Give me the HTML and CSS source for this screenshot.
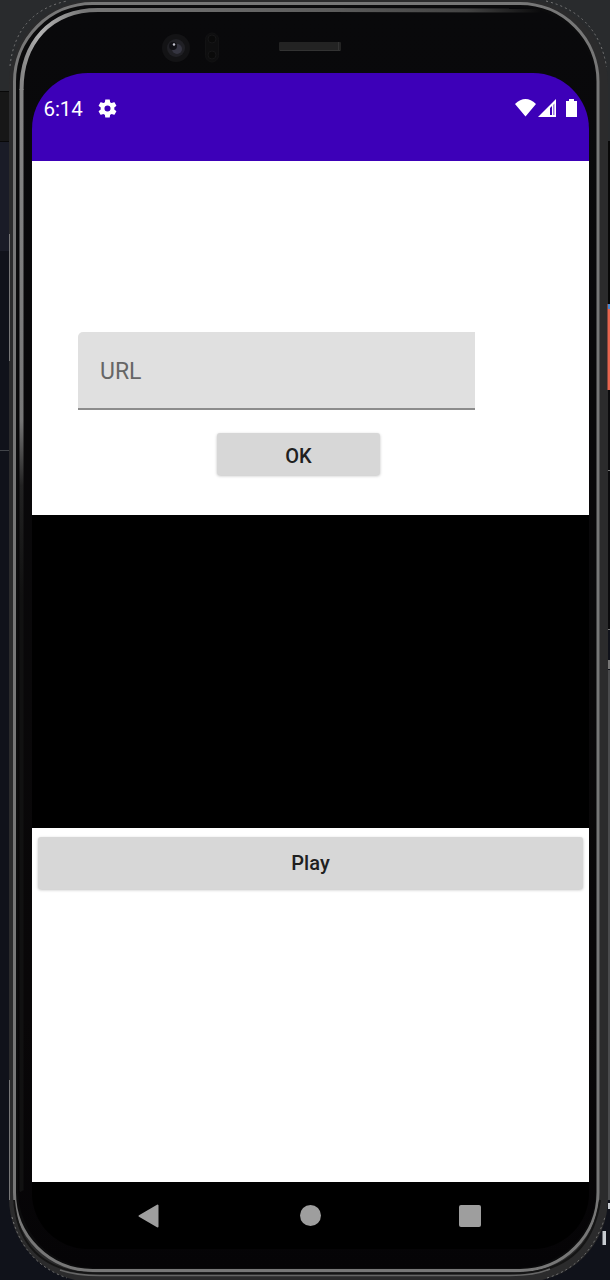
FILE: index.html
```html
<!DOCTYPE html>
<html lang="en">
<head>
<meta charset="utf-8">
<title>Video player</title>
<link rel="stylesheet" href="styles.css">
</head>
<body>
<div class="desktop">
  <svg class="frame" viewBox="0 0 610 1280" aria-hidden="true">
    <defs>
      <linearGradient id="rim" x1="0" y1="0" x2="1" y2="0">
        <stop offset="0" stop-color="#858585"/><stop offset=".06" stop-color="#b2b2b2"/><stop offset=".2" stop-color="#777"/><stop offset="1" stop-color="#5c5c5c"/>
      </linearGradient>
      <linearGradient id="side" x1="0" y1="0" x2="0" y2="1">
        <stop offset="0" stop-color="#858585"/><stop offset=".3" stop-color="#777"/><stop offset=".36" stop-color="#222"/><stop offset=".46" stop-color="#111"/><stop offset="1" stop-color="#111"/>
      </linearGradient>
      <linearGradient id="fade" x1="0" y1="0" x2="1" y2="0">
        <stop offset="0" stop-color="#5c5c5c"/><stop offset=".65" stop-color="#444"/><stop offset="1" stop-color="#0b0b0c"/>
      </linearGradient>
      <linearGradient id="glass" x1="0" y1="0" x2="0" y2="1">
        <stop offset="0" stop-color="#09090b"/><stop offset=".8" stop-color="#090708"/><stop offset="1" stop-color="#050406"/>
      </linearGradient>
    </defs>
    <path fill="#10121a" d="M0 0H610V1280H0z"/>
    <path fill="#292b2d" d="M0 0H610V141H0z"/>
    <path fill="#171717" d="M0 92H12V141H0z"/>
    <path fill="#080808" d="M0 91H12V92H0zM0 141H12V142H0zM604 141H610V304H604z"/>
    <path fill="#1a1c27" d="M0 142H12V251H0z"/>
    <path fill="#42454a" d="M0 450H12V451H0z"/>
    <path fill="#0b0b0d" d="M604 390H610V629H604z"/>
    <path fill="#777" d="M604 470H610V471H604zM604 629H610V630H604zM604 660H610V669H604z"/>
    <path fill="#4a4b4d" d="M604 670H610V1200H604z"/>
    <rect x="9" y="0" width="599" height="1282" rx="84" fill="#2b2b2c"/>
    <path fill="none" stroke="#777" stroke-width="1" d="M9.500 234V361M9.500 1080V1200"/>
    <path fill="none" stroke="#777" stroke-width="1" stroke-dasharray="2 3" d="M10 66Q16 12 67 1M546 1Q598 14 606.500 67M12 1217Q24 1263 67 1278M547 1278Q590 1265 605 1217"/>
    <rect x="14.500" y="3.500" width="583.500" height="1267" rx="78" fill="#0b0b0c" stroke="#777" stroke-width="3"/>
    <path fill="none" stroke="#151515" stroke-width="2" d="M14 1200Q20 1272 96 1273.500H515Q590 1272 600 1200"/>
    <path fill="none" stroke="#666" stroke-width="1.500" d="M60 1270Q76 1275.500 100 1275.500H510Q535 1275.500 550 1269"/>
    <path fill="url(#glass)" d="M18 86A76 76 0 0 1 94 7H518A78 78 0 0 1 596 85V1190A78 78 0 0 1 518 1268H94A76 78 0 0 1 18 1190z"/>
    <path fill="none" stroke="url(#side)" stroke-width="4" d="M21.500 89V1190L22 1191"/>
    <path fill="none" stroke="url(#rim)" stroke-width="4" d="M21.500 90C21.500 43 50 10 98 10H332"/>
    <path fill="none" stroke="url(#fade)" stroke-width="4" d="M331 10L540 10.500"/>
    <path fill="#e8654f" d="M607.500 304H610V390H607.500z"/><path fill="#4888d0" d="M608 304H610V309H608z"/>
    <path fill="#c7cbd0" d="M608 1203H610V1209H608zM602.500 1231H606V1245H602.500z"/>
    <circle cx="176" cy="48" r="14" fill="#131315"/><circle cx="176" cy="48" r="9" fill="#202025"/><circle cx="177" cy="49" r="5" fill="#353541"/><circle cx="173" cy="46" r="4" fill="#111116"/><circle cx="174" cy="44.500" r="1.200" fill="#c5c5d0"/>
    <rect x="205.500" y="33" width="13" height="29" rx="6.500" fill="#0e0e0f" stroke="#121213"/><circle cx="212" cy="39" r="4" fill="#0a0a0a" stroke="#161617"/><circle cx="212" cy="55" r="4" fill="#0a0a0a" stroke="#161617"/>
    <rect x="279" y="42" width="62" height="9" rx="1" fill="#232323"/><path stroke="#333" d="M280 50.500H340M338.500 42V50"/>
  </svg>
  <main class="screen">
    <header class="status">
      <div class="status-left">
        <span class="clock">6:14</span>
        <svg class="gear" viewBox="2 2 20 20"><path fill="#fff" d="M19.14 12.94c.04-.3.06-.61.06-.94s-.02-.64-.07-.94l2.03-1.58c.18-.14.23-.41.12-.61l-1.92-3.32c-.12-.22-.37-.29-.59-.22l-2.39.96c-.5-.38-1.030-.7-1.620-.94L14.4 2.810c-.04-.24-.24-.41-.48-.41h-3.840c-.24 0-.43.17-.47.41l-.36 2.540c-.59.24-1.130.57-1.620.94l-2.390-.96c-.22-.08-.47 0-.59.22L2.740 8.870c-.12.210-.08.470.12.610l2.030 1.580c-.05.3-.09.630-.09.940s.02.640.07.940l-2.030 1.580c-.18.140-.23.410-.12.610l1.920 3.320c.12.220.37.290.59.220l2.390-.96c.5.380 1.030.7 1.620.940l.36 2.540c.05.240.24.410.48.410h3.840c.24 0 .44-.17.47-.41l.36-2.540c.59-.24 1.130-.56 1.620-.94l2.390.96c.22.080.47 0 .59-.22l1.920-3.320c.12-.22.07-.47-.12-.61l-2.010-1.580zM12 15.200A3.200 3.200 0 1 1 12 8.800a3.200 3.200 0 0 1 0 6.400z"/></svg>
      </div>
      <svg class="signals" viewBox="0 0 62 18">
        <path fill="#fff" d="M0 5Q10.500-5 21 5L10.500 17.500zM23 18L41 0V18zM51 2H54V0H59V2H62V18H51z"/>
        <path fill="#3d00b8" d="M35 9L37 7V16H35z"/>
        <path fill="#9c7bdd" d="M38 6L39.500 4.500V16H38z"/>
      </svg>
    </header>
    <section class="form">
      <div class="field">URL</div>
      <button class="btn ok">OK</button>
    </section>
    <section class="video"></section>
    <section class="controls">
      <button class="btn play">Play</button>
    </section>
    <nav class="nav">
      <svg class="back" viewBox="0 0 21 24"><path fill="#9e9e9e" stroke="#9e9e9e" stroke-width="2" stroke-linejoin="round" d="M1.500 12L19.500 1.500V22.500z"/></svg>
      <span class="home"></span>
      <span class="recent"></span>
    </nav>
  </main>
</div>
</body>
</html>
```
FILE: styles.css
```css
* { box-sizing: border-box; }
body { margin: 0; font-family: Roboto, sans-serif; }
.desktop {
  position: relative;
  width: 610px;
  height: 1280px;
  padding: 73px 21.5px 0 32px;
  overflow: hidden;
}
.frame {
  position: absolute;
  inset: 0;
  width: 610px;
  height: 1280px;
}
.screen {
  position: relative;
  display: flex;
  flex-direction: column;
  height: 1176px;
  border-radius: 56px;
  overflow: hidden;
}
.status {
  display: flex;
  justify-content: space-between;
  align-items: flex-start;
  height: 88.4px;
  padding: 25px 11.5px 0 11.5px;
  background: #3d00b8;
  color: #fff;
}
.status-left { display: flex; align-items: center; gap: 15px; }
.clock { font-size: 20.5px; line-height: 22px; letter-spacing: -.1px; }
.gear { width: 19px; height: 19px; margin-top: -2px; }
.signals { width: 62px; height: 18px; margin-top: 1px; }
.form {
  display: flex;
  flex-direction: column;
  height: 353.6px;
  padding: 170.600px 0 0 46px;
  background: #fff;
}
.field {
  display: flex;
  align-items: center;
  width: 397px;
  height: 78.4px;
  padding: 2px 0 0 22px;
  border-bottom: 2px solid #8c8c8c;
  border-radius: 5px 0 0 0;
  background: #e0e0e0;
  color: #666;
  font-size: 23px;
}
.btn {
  border: 0;
  border-radius: 3px;
  background: #d7d7d7;
  box-shadow: 0 1px 3px rgba(0, 0, 0, .25);
  color: #202020;
  font: 500 20px Roboto, sans-serif;
  padding: 0;
}
.ok { width: 163px; height: 41.5px; margin: 23px 0 0 139px; padding-top: 3px; }
.video { height: 313px; background: #000; }
.controls { height: 354px; padding: 9px 6px 0; background: #fff; }
.play { width: 545px; height: 52px; letter-spacing: .1px; }
.nav {
  display: flex;
  align-items: flex-start;
  height: 67px;
  padding: 22px 0 0 106px;
  background: #000;
}
.back { width: 21px; height: 24px; }
.home { width: 21px; height: 21px; margin: 1px 0 0 141px; border-radius: 50%; background: #9e9e9e; }
.recent { width: 22px; height: 22px; margin: 1px 0 0 138px; border-radius: 2px; background: #9e9e9e; }
```
